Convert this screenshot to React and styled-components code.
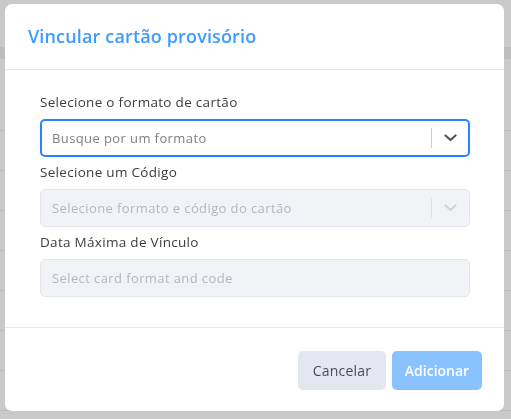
import React from "react";
import styled, { createGlobalStyle } from "styled-components";

const GlobalStyle = createGlobalStyle`
  html, body { margin: 0; padding: 0; height: 100%; }
  body {
    font-family: "Open Sans", "Liberation Sans", sans-serif;
    background: #c9c9c9;
    overflow: hidden;
  }
  * { box-sizing: border-box; }
`;

const Page = styled.div`
  height: 100vh;
  display: flex;
  flex-direction: column;
  padding-top: 47px;
`;

const PageBand = styled.div`
  height: 12px;
  background: #bdbdbd;
  margin-bottom: 32px;
`;

const PageRow = styled.div`
  height: 40px;
  border-bottom: 1px solid #bababa;
`;

const Overlay = styled.div`
  position: fixed;
  inset: 0;
  display: flex;
  align-items: flex-start;
  justify-content: flex-start;
  padding: 4px 0 0 5px;
`;

const Modal = styled.div`
  width: 499px;
  height: 407px;
  background: #ffffff;
  border-radius: 7px;
  display: flex;
  flex-direction: column;
  overflow: hidden;
`;

const Header = styled.div`
  height: 66px;
  flex: none;
  display: flex;
  align-items: center;
  padding: 0 23px 1px;
  border-bottom: 1px solid #e9e9ec;
`;

const Title = styled.h2`
  margin: 0;
  font-size: 18px;
  font-weight: 600;
  color: #3d9bff;
  letter-spacing: 0.15px;
`;

const Body = styled.div`
  flex: none;
  display: flex;
  flex-direction: column;
  gap: 5px;
  padding: 22px 34px 30px 35px;
  border-bottom: 1px solid #e9e9ec;
`;

const Field = styled.div`
  display: flex;
  flex-direction: column;
  gap: 6px;
`;

const Label = styled.label`
  font-size: 13.5px;
  line-height: 21px;
  color: #3b3d42;
  letter-spacing: 0.3px;
`;

const Control = styled.div`
  height: 38px;
  display: flex;
  align-items: center;
  border-radius: 5px;
  border: ${(p) => (p.$focused ? "2px solid #2684ff" : "1px solid #e3e6eb")};
  background: ${(p) => (p.$disabled ? "#f1f3f7" : "#ffffff")};
  padding-left: ${(p) => (p.$focused ? "10px" : "11px")};
`;

const Placeholder = styled.span`
  flex: 1;
  font-size: 13px;
  color: ${(p) => (p.$disabled ? "#b4b8bf" : "#808080")};
  letter-spacing: 0.4px;
  white-space: nowrap;
`;

const Separator = styled.span`
  width: 1px;
  height: 20px;
  background: ${(p) => (p.$disabled ? "#dfe1e5" : "#cccccc")};
`;

const Indicator = styled.span`
  width: ${(p) => (p.$focused ? "36px" : "37px")};
  display: flex;
  align-items: center;
  justify-content: center;
  color: ${(p) => (p.$disabled ? "#cfd2d6" : "#555555")};
`;

const Footer = styled.div`
  flex: 1;
  display: flex;
  justify-content: flex-end;
  align-items: flex-start;
  gap: 6px;
  padding: 23px 22px 0 0;
`;

const Button = styled.button`
  height: 39px;
  border: none;
  border-radius: 5px;
  font-family: inherit;
  font-size: 14px;
  padding: 0;
  width: ${(p) => p.$w}px;
  background: ${(p) => (p.$primary ? "#88c3ff" : "#e4e6f0")};
  color: ${(p) => (p.$primary ? "#ffffff" : "#4a4d57")};
  font-weight: ${(p) => (p.$primary ? 600 : 400)};
  letter-spacing: ${(p) => (p.$primary ? "0px" : "0.2px")};
`;

const Chevron = () => (
  <svg width="13" height="8" viewBox="0 0 13 8" fill="none">
    <path d="M1.5 1.5 L6.5 6 L11.5 1.5" stroke="currentColor" strokeWidth="2.2" strokeLinecap="round" strokeLinejoin="round" />
  </svg>
);

const Select = ({ placeholder, focused, disabled }) => (
  <Control $focused={focused} $disabled={disabled}>
    <Placeholder $disabled={disabled}>{placeholder}</Placeholder>
    <Separator $disabled={disabled} />
    <Indicator $focused={focused} $disabled={disabled}>
      <Chevron />
    </Indicator>
  </Control>
);

export default function App() {
  return (
    <>
      <GlobalStyle />
      <Page>
        <PageBand />
        {Array.from({ length: 8 }).map((_, i) => (
          <PageRow key={i} />
        ))}
      </Page>
      <Overlay>
        <Modal>
          <Header>
            <Title>Vincular cartão provisório</Title>
          </Header>
          <Body>
            <Field>
              <Label>Selecione o formato de cartão</Label>
              <Select placeholder="Busque por um formato" focused />
            </Field>
            <Field>
              <Label>Selecione um Código</Label>
              <Select placeholder="Selecione formato e código do cartão" disabled />
            </Field>
            <Field>
              <Label>Data Máxima de Vínculo</Label>
              <Control $disabled>
                <Placeholder $disabled>Select card format and code</Placeholder>
              </Control>
            </Field>
          </Body>
          <Footer>
            <Button $w={88}>Cancelar</Button>
            <Button $w={90} $primary>Adicionar</Button>
          </Footer>
        </Modal>
      </Overlay>
    </>
  );
}
